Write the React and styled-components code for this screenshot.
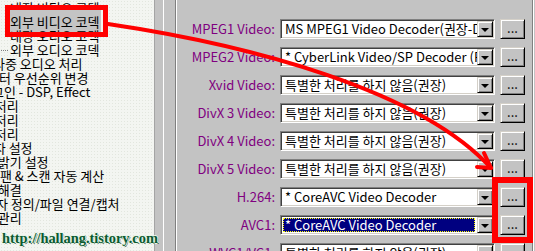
import styled, { createGlobalStyle } from "styled-components";

const GlobalStyle = createGlobalStyle`
  html, body {
    margin: 0;
    padding: 0;
  }
  body {
    width: 535px;
    height: 251px;
    overflow: hidden;
    background: #c3c3c3;
    font-family: "Noto Sans CJK KR", sans-serif;
    font-size: 13px;
  }
`;

const Screen = styled.div`
  position: relative;
  display: flex;
  width: 535px;
  height: 251px;
  overflow: hidden;
  background: #c3c3c3;
`;

const TreePanel = styled.div`
  flex: none;
  width: 154px;
  padding-top: 1px;
  overflow: hidden;
  background-color: #f3f5f1;
  background-image: radial-gradient(#e2e6de 0.8px, transparent 1px);
  background-size: 3px 3px;
`;

const TreeRow = styled.div`
  position: relative;
  height: 14px;
  line-height: 14px;
  padding-left: ${(p) => p.$indent || 0}px;
  white-space: nowrap;
  color: #000;
`;

const Connector = styled.span`
  position: absolute;
  left: 1px;
  top: 7px;
  width: 7px;
  border-top: 1px dotted #808080;
`;

const TreeLabel = styled.span`
  margin-left: ${(p) => p.$shift || 0}px;
  padding: 2px 1px;
  background: ${(p) => (p.$selected ? "#c4c4c4" : "transparent")};
`;

const Splitter = styled.div`
  flex: none;
  width: 20px;
  border-left: 1px solid #a4a4a4;
  background: linear-gradient(
    to right,
    #c3c3c3 0 8px,
    #ffffff 8px 9px,
    #c3c3c3 9px
  );
`;

const GroupBox = styled.div`
  flex: none;
  width: 355px;
  border-left: 1px solid #808080;
  border-right: 1px solid #808080;
  box-shadow: inset 1px 0 0 #fff, 1px 0 0 #fff;
  padding: 15px 0 0 1px;
`;

const OptionRow = styled.div`
  display: grid;
  grid-template-columns: 98px 215px 25px;
  column-gap: 5px;
  align-items: center;
  height: 28px;
`;

const Label = styled.div`
  text-align: right;
  color: #800080;
  white-space: nowrap;
  line-height: 14px;
`;

const Select = styled.div`
  box-sizing: border-box;
  display: flex;
  align-items: center;
  height: 20px;
  padding: 1px;
  background: #fff;
  border: 1px solid;
  border-color: #808080 #fff #fff #808080;
  box-shadow: inset 1px 1px 0 #404040, inset -1px -1px 0 #d4d0c8;
`;

const SelectValue = styled.div`
  flex: 1;
  min-width: 0;
  height: ${(p) => (p.$focused ? "14px" : "16px")};
  margin: ${(p) => (p.$focused ? "1px 2px 1px 1px" : "0")};
  padding-left: ${(p) => (p.$focused ? "2px" : "3px")};
  line-height: ${(p) => (p.$focused ? "14px" : "16px")};
  overflow: hidden;
  white-space: nowrap;
  color: ${(p) => (p.$focused ? "#fff" : "#000")};
  background: ${(p) => (p.$focused ? "#000080" : "transparent")};
  outline: ${(p) => (p.$focused ? "1px dotted #ffff00" : "none")};
  outline-offset: -1px;
`;

const DropButton = styled.div`
  flex: none;
  box-sizing: border-box;
  display: flex;
  align-items: center;
  justify-content: center;
  width: 16px;
  height: 16px;
  background: #c3c3c3;
  border: 1px solid;
  border-color: #d4d0c8 #000 #000 #d4d0c8;
  box-shadow: inset 1px 1px 0 #fff, inset -1px -1px 0 #808080;

  &::after {
    content: "";
    border-left: 4px solid transparent;
    border-right: 4px solid transparent;
    border-top: 4px solid #000;
    margin-top: 1px;
  }
`;

const DotsButton = styled.button`
  box-sizing: border-box;
  width: 25px;
  height: 20px;
  padding: 0 0 2px;
  font: inherit;
  line-height: 16px;
  color: #000;
  background: #c3c3c3;
  border: 1px solid;
  border-color: #d4d0c8 #000 #000 #d4d0c8;
  box-shadow: inset 1px 1px 0 #fff, inset -1px -1px 0 #808080;
`;

const Overlay = styled.svg`
  position: absolute;
  left: 0;
  top: 0;
  pointer-events: none;
`;

const Watermark = styled.div`
  position: absolute;
  left: 2px;
  top: 230px;
  font-family: "Liberation Serif", serif;
  font-weight: bold;
  font-size: 14.4px;
  line-height: 16px;
  color: #0b5a31;
  text-shadow: 1px 0 0 #e8f5ea, -1px 0 0 #e8f5ea, 0 1px 0 #e8f5ea,
    0 -1px 0 #e8f5ea, 1px 1px 0 #1d3a26;
  white-space: nowrap;
`;

const treeItems = [
  { text: "내장 비디오 코덱", indent: 9 },
  { text: "외부 비디오 코덱", indent: 9, selected: true },
  { text: "내장 오디오 코덱", indent: 9 },
  { text: "외부 오디오 코덱", indent: 9, connector: true },
  { text: "다중 오디오 처리", shift: -8 },
  { text: "필터 우선순위 변경", shift: -14 },
  { text: "플러그인 - DSP, Effect", shift: -33 },
  { text: "자막 처리", shift: -33 },
  { text: "영상 처리", shift: -33 },
  { text: "음성 처리", shift: -33 },
  { text: "자막 글자 설정", shift: -46 },
  { text: "화면 밝기 설정", shift: -30 },
  { text: "팬 & 스캔 자동 계산", shift: -1 },
  { text: "문제 해결", shift: -30 },
  { text: "사용자 정의/파일 연결/캡처", shift: -29 },
  { text: "설정 관리", shift: -30 },
];

const NONE = "특별한 처리를 하지 않음(권장)";
const CORE = "* CoreAVC Video Decoder";

const options = [
  { label: "MPEG1 Video:", value: "MS MPEG1 Video Decoder(권장-DirectShow)" },
  { label: "MPEG2 Video:", value: "* CyberLink Video/SP Decoder (PDVD7)" },
  { label: "Xvid Video:", value: NONE },
  { label: "DivX 3 Video:", value: NONE },
  { label: "DivX 4 Video:", value: NONE },
  { label: "DivX 5 Video:", value: NONE },
  { label: "H.264:", value: CORE },
  { label: "AVC1:", value: CORE, focused: true },
  { label: "WVC1/VC1:", value: NONE },
];

export default function App() {
  return (
    <>
      <GlobalStyle />
      <Screen>
        <TreePanel>
          {treeItems.map((item, i) => (
            <TreeRow key={i} $indent={item.indent}>
              {item.connector && <Connector />}
              <TreeLabel $shift={item.shift} $selected={item.selected}>
                {item.text}
              </TreeLabel>
            </TreeRow>
          ))}
        </TreePanel>
        <Splitter />
        <GroupBox>
          {options.map((opt) => (
            <OptionRow key={opt.label}>
              <Label>{opt.label}</Label>
              <Select>
                <SelectValue $focused={opt.focused}>{opt.value}</SelectValue>
                <DropButton />
              </Select>
              <DotsButton>...</DotsButton>
            </OptionRow>
          ))}
        </GroupBox>

        <Watermark>http://hallang.tistory.com</Watermark>

        <Overlay width="535" height="251" viewBox="0 0 535 251">
          <rect x="7.5" y="7.5" width="98" height="27" fill="none" stroke="#ff0000" strokeWidth="5" />
          <rect x="495" y="180" width="35" height="60" fill="none" stroke="#ff0000" strokeWidth="6" />
          <path
            d="M108 24 C 250 45 420 90 491 168"
            fill="none"
            stroke="#ff0000"
            strokeWidth="4"
            strokeLinecap="round"
          />
          <path
            d="M484 153 L491 168 L477 167"
            fill="none"
            stroke="#ff0000"
            strokeWidth="4"
            strokeLinecap="round"
            strokeLinejoin="round"
          />
        </Overlay>
      </Screen>
    </>
  );
}
